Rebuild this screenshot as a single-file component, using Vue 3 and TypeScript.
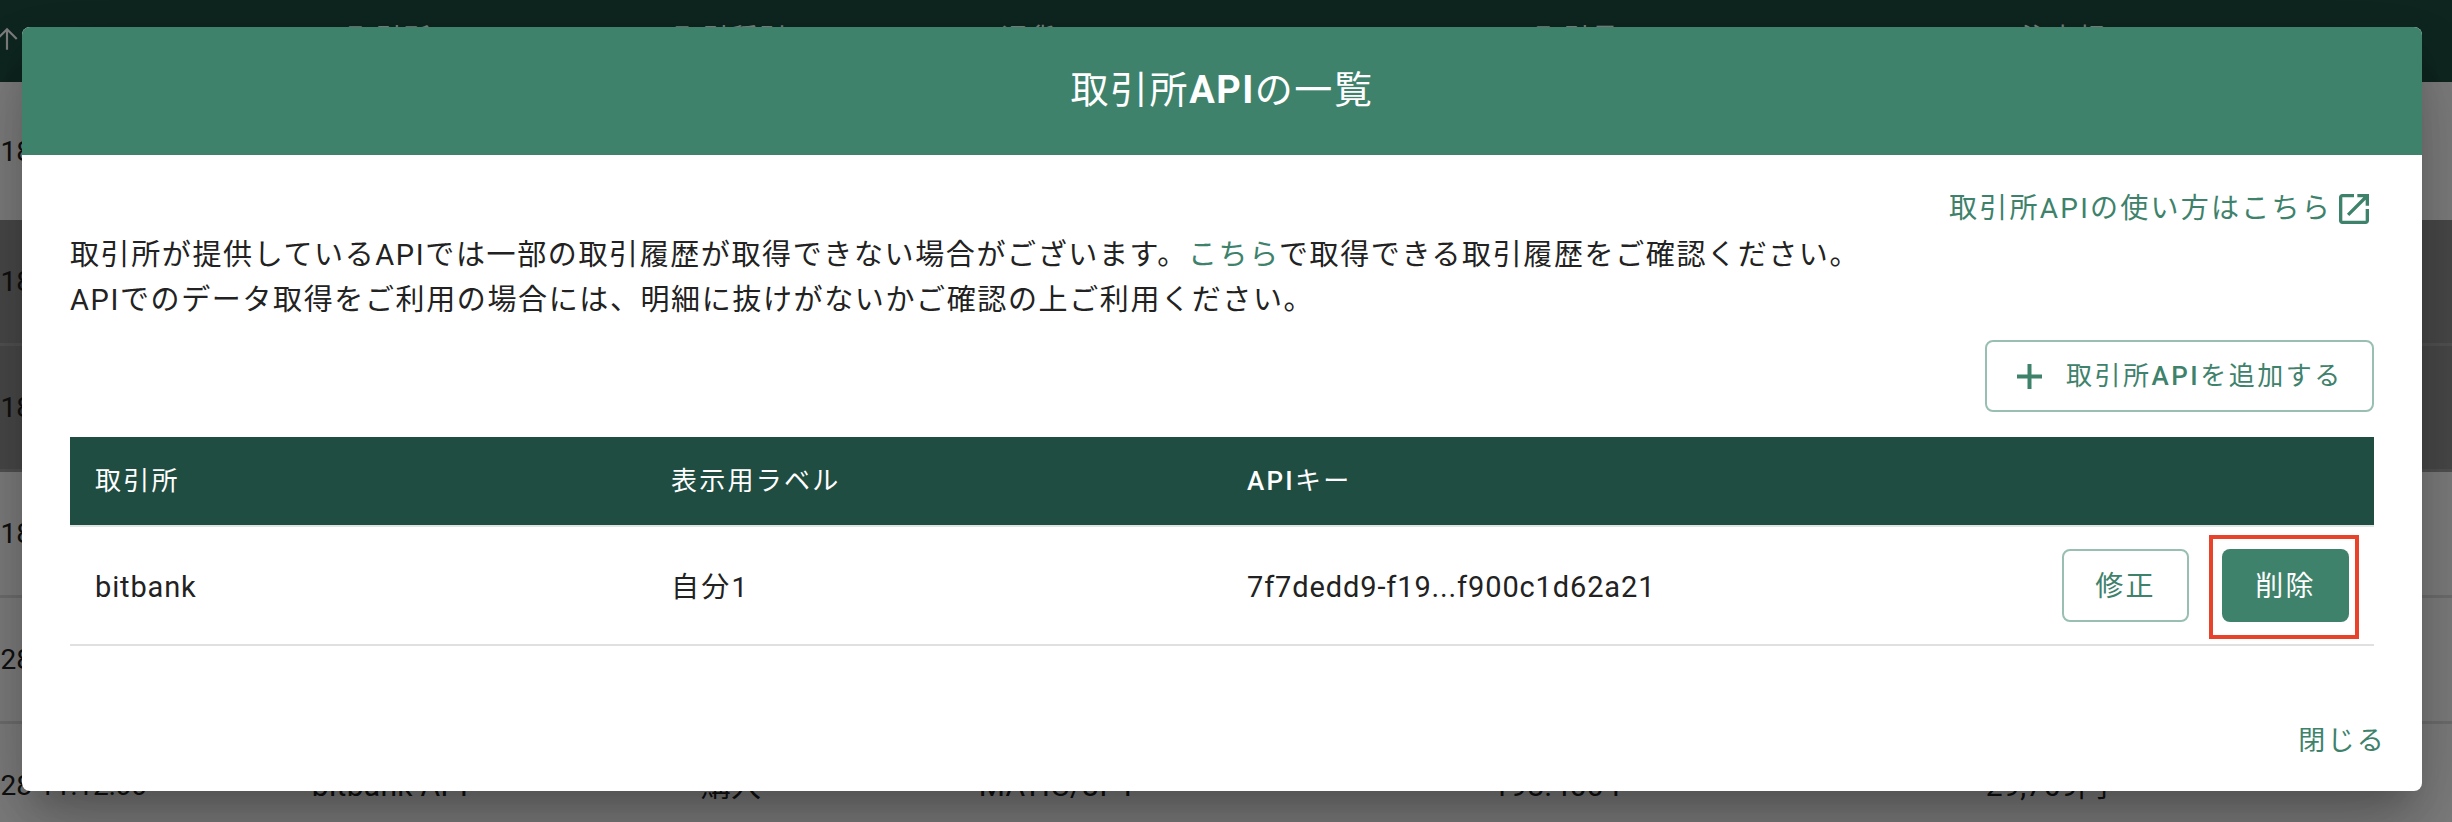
<script setup lang="ts">
interface TradeRow {
  date: string
  source: string
  kind: string
  pair: string
  amount: string
  price: string
  tone: 'plain' | 'shade'
  tall?: boolean
}

const headers: string[] = ['取引所', '取引種別', '通貨ペア', '取引量', '注文額']

const rows: TradeRow[] = [
  { date: '18 11:12:00', source: '', kind: '', pair: '', amount: '', price: '', tone: 'plain', tall: true },
  { date: '18 11:12:00', source: '', kind: '', pair: '', amount: '', price: '', tone: 'shade' },
  { date: '18 11:12:00', source: '', kind: '', pair: '', amount: '', price: '', tone: 'shade' },
  { date: '18 11:12:00', source: '', kind: '', pair: '', amount: '', price: '', tone: 'plain' },
  { date: '28 11:12:00', source: '', kind: '', pair: '', amount: '', price: '', tone: 'plain' },
  { date: '28 11:12:00', source: 'bitbank API', kind: '購入', pair: 'MATIC/JPY', amount: '198.4004', price: '29,769円', tone: 'plain' },
]
</script>

<template>
  <div class="screen">
    <div class="page">
      <div class="page-head">
        <div class="sort-cell">
          <svg class="sort-icon" viewBox="0 0 24 24" aria-hidden="true">
            <path d="M12 22V3M3 12l9-9 9 9" fill="none" stroke="currentColor" stroke-width="2" />
          </svg>
        </div>
        <div v-for="h in headers" :key="h" class="head-cell">{{ h }}</div>
      </div>
      <div
        v-for="(r, i) in rows"
        :key="i"
        class="page-row"
        :class="[r.tone, { tall: r.tall }]"
      >
        <div class="date-cell"><span>{{ r.date }}</span></div>
        <div class="cell">{{ r.source }}</div>
        <div class="cell">{{ r.kind }}</div>
        <div class="cell">{{ r.pair }}</div>
        <div class="cell">{{ r.amount }}</div>
        <div class="cell">{{ r.price }}</div>
      </div>
    </div>

    <div class="backdrop">
      <section class="dialog">
        <header class="dialog-title"><span>取引所<b>API</b>の一覧</span></header>

        <div class="dialog-body">
          <div class="guide-row">
            <a class="guide-link">
              <span>取引所APIの使い方はこちら</span>
              <svg class="open-icon" viewBox="0 0 24 24" aria-hidden="true">
                <path
                  d="M19 19H5V5h7V3H5c-1.11 0-2 .9-2 2v14c0 1.1.89 2 2 2h14c1.1 0 2-.9 2-2v-7h-2v7zM14 3v2h3.59l-9.83 9.83 1.41 1.41L19 6.41V10h2V3h-7z"
                  fill="currentColor"
                />
              </svg>
            </a>
          </div>

          <p class="notice">
            取引所が提供しているAPIでは一部の取引履歴が取得できない場合がございます。<a class="inline-link">こちら</a>で取得できる取引履歴をご確認ください。<br />
            APIでのデータ取得をご利用の場合には、明細に抜けがないかご確認の上ご利用ください。
          </p>

          <div class="add-row">
            <button class="btn outline add-btn" type="button">
              <svg class="plus-icon" viewBox="0 0 25 25" aria-hidden="true">
                <path d="M0 12.5h25M12.5 0v25" fill="none" stroke="currentColor" stroke-width="4" />
              </svg>
              <span>取引所<b>API</b>を追加する</span>
            </button>
          </div>

          <div class="api-table">
            <div class="api-head">
              <div>取引所</div>
              <div>表示用ラベル</div>
              <div><b>API</b>キー</div>
              <div></div>
            </div>
            <div class="api-row">
              <div class="text-cell">bitbank</div>
              <div class="text-cell label-cell">自分1</div>
              <div class="text-cell">7f7dedd9-f19...f900c1d62a21</div>
              <div class="actions">
                <button class="btn outline small" type="button">修正</button>
                <span class="highlight">
                  <button class="btn solid small" type="button">削除</button>
                </span>
              </div>
            </div>
          </div>
        </div>

        <footer class="dialog-foot">
          <a class="close-link">閉じる</a>
        </footer>
      </section>
    </div>
  </div>
</template>

<style scoped>
.screen {
  position: relative;
  width: 2452px;
  height: 822px;
  overflow: hidden;
  background: #fff;
  font-family: Roboto, "Noto Sans CJK JP", sans-serif;
  font-size: 28px;
  line-height: 45px;
  letter-spacing: 0.08em;
  color: #222;
}

.page-head,
.page-row {
  display: grid;
  grid-template-columns: 147px 486px 196px 458px 540px 440px 185px;
  align-items: center;
  text-align: center;
}

.page-head {
  height: 82px;
  background: #1f4d41;
  color: #fff;
  font-size: 26px;
}

.sort-cell {
  display: flex;
  height: 82px;
  align-items: flex-start;
}

.sort-icon {
  width: 26px;
  height: 30px;
  flex: none;
  margin: 24px 0 0 -6px;
}

.head-cell {
  padding-bottom: 6px;
}

.head-cell:nth-child(5) {
  padding-left: 42px;
}

.head-cell:nth-child(6) {
  padding-left: 34px;
}

.page-row {
  height: 126px;
  box-sizing: border-box;
  border-bottom: 3px solid #e0e0e0;
  color: #222;
}

.page-row.tall {
  height: 138px;
  border-bottom: 0;
}

.page-row.shade {
  background: #949494;
  border-bottom-color: #a6a6a6;
}

.date-cell {
  display: flex;
  justify-content: flex-end;
  overflow: hidden;
  white-space: nowrap;
  font-size: 28px;
  letter-spacing: 0;
}

.cell {
  white-space: nowrap;
  font-size: 30px;
  letter-spacing: 0.01em;
}

.backdrop {
  position: absolute;
  inset: 0;
  display: flex;
  box-sizing: border-box;
  padding: 27px 30px 31px 22px;
  background: rgba(0, 0, 0, 0.5);
}

.dialog {
  display: flex;
  flex-direction: column;
  width: 100%;
  overflow: hidden;
  background: #fff;
  border-radius: 8px;
  box-shadow:
    0 22px 30px -14px rgba(0, 0, 0, 0.2),
    0 48px 76px 6px rgba(0, 0, 0, 0.14),
    0 18px 92px 16px rgba(0, 0, 0, 0.12);
}

.dialog-title {
  display: flex;
  justify-content: center;
  align-items: center;
  height: 128px;
  padding-bottom: 2px;
  box-sizing: border-box;
  background: #3e826c;
  color: #fff;
  font-size: 38px;
  letter-spacing: 0.04em;
}

b {
  font-weight: 500;
}

.dialog-title b {
  font-weight: 700;
}

.dialog-body {
  padding: 31px 48px 0;
}

.guide-row {
  display: flex;
  justify-content: flex-end;
}

.guide-link {
  display: flex;
  align-items: center;
  color: #3e826c;
  height: 45px;
  letter-spacing: 0.08em;
}

.open-icon {
  width: 40px;
  height: 40px;
  margin: 0 0 0 2px;
}

.notice {
  margin: 2px 0 17px;
  color: #222;
  font-size: 29px;
  letter-spacing: 1.62px;
}

.inline-link {
  color: #3e826c;
}

.add-row {
  display: flex;
  justify-content: flex-end;
  margin-bottom: 25px;
}

.btn {
  box-sizing: border-box;
  font: inherit;
  letter-spacing: inherit;
  border-radius: 8px;
  cursor: pointer;
}

.outline {
  background: #fff;
  border: 2px solid #98bfb1;
  color: #3e826c;
}

.solid {
  background: #3e826c;
  border: 0;
  color: #fff;
}

.add-btn {
  display: flex;
  align-items: center;
  gap: 24px;
  width: 389px;
  height: 72px;
  padding: 0 0 0 30px;
  font-size: 26px;
  letter-spacing: 2.5px;
}

.plus-icon {
  width: 25px;
  height: 25px;
  flex: none;
}

.api-head,
.api-row {
  display: grid;
  grid-template-columns: 576px 576px 1fr auto;
  align-items: center;
  padding-left: 25px;
}

.api-head {
  height: 90px;
  box-sizing: border-box;
  background: #204d42;
  border-bottom: 2px solid #dfe5e3;
  color: #fff;
  font-size: 26px;
}

.api-row {
  height: 119px;
  box-sizing: border-box;
  border-bottom: 2px solid #e0e0e0;
  font-size: 29px;
  letter-spacing: 0.03em;
}

.text-cell {
  padding-top: 3px;
}

.label-cell {
  font-size: 28px;
  letter-spacing: 0.08em;
}

.actions {
  display: flex;
  align-items: center;
  padding-right: 15px;
}

.small {
  width: 127px;
  height: 73px;
  padding: 2px 0 0;
  font-size: 28px;
  letter-spacing: 0.08em;
}

.highlight {
  display: block;
  box-sizing: border-box;
  width: 150px;
  height: 104px;
  margin: 3px 0 0 20px;
  padding: 10px 5px 13px 9px;
  border: 4px solid #e8432a;
  line-height: 0;
}

.highlight .btn {
  line-height: 45px;
}

.dialog-foot {
  display: flex;
  justify-content: flex-end;
  padding: 73px 36px 0 0;
}

.close-link {
  color: #3e826c;
  height: 45px;
  font-size: 27px;
}
</style>
